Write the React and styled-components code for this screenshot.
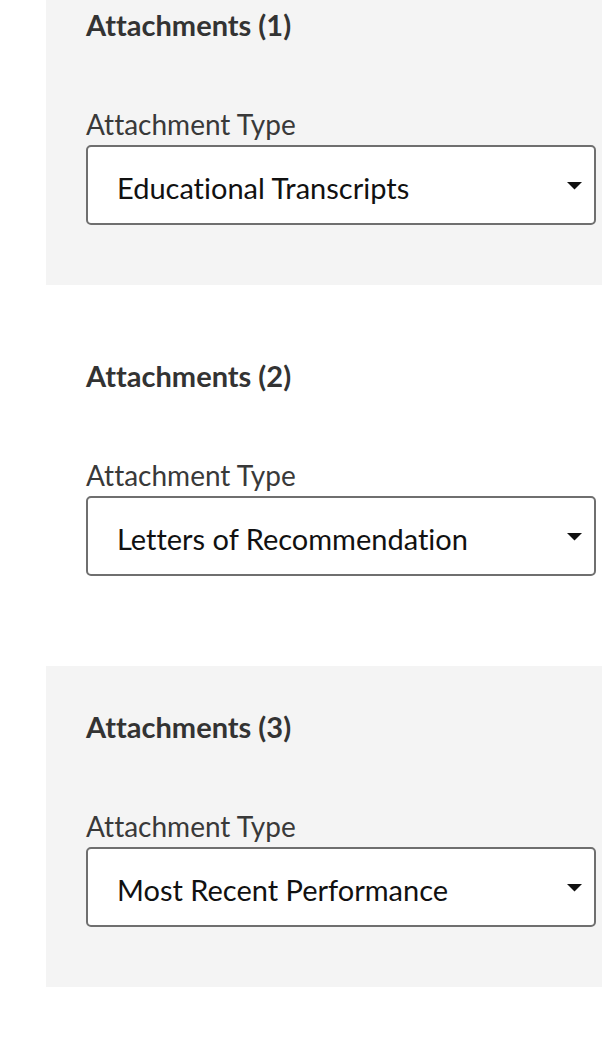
import React from "react";
import styled, { createGlobalStyle } from "styled-components";

const GlobalStyle = createGlobalStyle`
  html, body {
    margin: 0;
    padding: 0;
    background: #ffffff;
    font-family: Lato, "Liberation Sans", sans-serif;
    font-variant-ligatures: none;
    overflow: hidden;
  }
`;

const List = styled.main`
  display: flex;
  flex-direction: column;
  gap: 30px;
  margin: -36px 0 0 46px;
`;

const Section = styled.section`
  display: flex;
  flex-direction: column;
  height: 321px;
  box-sizing: border-box;
  padding: 44px 6px 0 40px;
  background-color: ${(p) => (p.$shaded ? "#f4f4f4" : "#ffffff")};
`;

const Heading = styled.h2`
  margin: 0;
  font-size: 29px;
  line-height: 1.2;
  font-weight: 700;
  color: #333333;
`;

const Label = styled.label`
  margin-top: 65px;
  font-size: 28px;
  line-height: 1.2;
  color: #393939;
`;

const SelectBox = styled.div`
  display: flex;
  align-items: center;
  justify-content: space-between;
  margin-top: 4px;
  height: 80px;
  box-sizing: border-box;
  padding: 7px 12px 0 29px;
  border: 2px solid #6f6f6f;
  border-radius: 5px;
  background: #ffffff;
  cursor: pointer;
`;

const Value = styled.span`
  font-size: 29px;
  line-height: 1.2;
  color: #111111;
`;

const Caret = () => (
  <svg width="15" height="8" viewBox="0 0 15 8" style={{ marginTop: "-6px" }}>
    <path d="M0 0 H15 L7.5 7.5 Z" fill="#111111" />
  </svg>
);

const attachments = [
  { id: 1, type: "Educational Transcripts" },
  { id: 2, type: "Letters of Recommendation" },
  { id: 3, type: "Most Recent Performance" },
];

export default function App() {
  return (
    <>
      <GlobalStyle />
      <List>
        {attachments.map((a) => (
          <Section key={a.id} $shaded={a.id % 2 === 1}>
            <Heading>Attachments ({a.id})</Heading>
            <Label>Attachment Type</Label>
            <SelectBox role="combobox">
              <Value>{a.type}</Value>
              <Caret />
            </SelectBox>
          </Section>
        ))}
      </List>
    </>
  );
}
